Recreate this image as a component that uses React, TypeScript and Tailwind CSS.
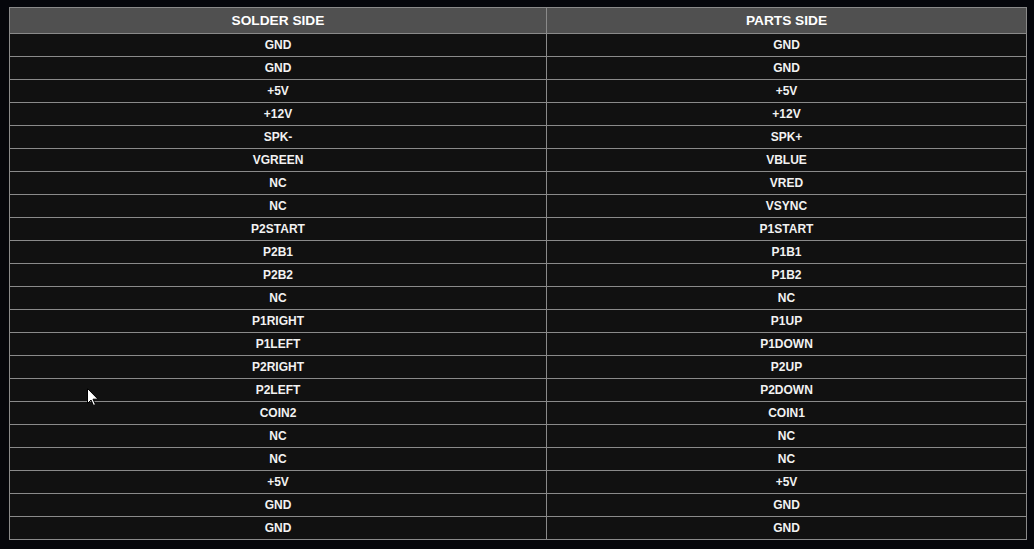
const rows: [string, string][] = [
  ["GND", "GND"],
  ["GND", "GND"],
  ["+5V", "+5V"],
  ["+12V", "+12V"],
  ["SPK-", "SPK+"],
  ["VGREEN", "VBLUE"],
  ["NC", "VRED"],
  ["NC", "VSYNC"],
  ["P2START", "P1START"],
  ["P2B1", "P1B1"],
  ["P2B2", "P1B2"],
  ["NC", "NC"],
  ["P1RIGHT", "P1UP"],
  ["P1LEFT", "P1DOWN"],
  ["P2RIGHT", "P2UP"],
  ["P2LEFT", "P2DOWN"],
  ["COIN2", "COIN1"],
  ["NC", "NC"],
  ["NC", "NC"],
  ["+5V", "+5V"],
  ["GND", "GND"],
  ["GND", "GND"],
];

export default function App() {
  return (
    <main
      className="relative w-[1034px] h-[549px] bg-[#05060b] pt-[7px] pl-[9px] overflow-hidden"
      style={{ fontFamily: '"Liberation Sans", Arial, sans-serif' }}
    >
      <table className="w-[1018px] border-collapse border border-[#8a8a8a] text-white font-bold">
        <thead>
          <tr className="h-[26px] bg-[#505050] text-[13.7px]">
            <th className="w-[537px] border border-[#8a8a8a] p-0 pt-px text-center">SOLDER SIDE</th>
            <th className="border border-[#8a8a8a] p-0 pt-px text-center">PARTS SIDE</th>
          </tr>
        </thead>
        <tbody>
          {rows.map(([solder, parts], i) => (
            <tr key={i} className="h-[23px] bg-[#111111] text-[12px] text-[#f2f2f2]">
              <td className="border border-[#8a8a8a] p-0 text-center">{solder}</td>
              <td className="border border-[#8a8a8a] p-0 text-center">{parts}</td>
            </tr>
          ))}
        </tbody>
      </table>

      {/* mouse pointer */}
      <svg
        className="absolute left-[87px] top-[388px]"
        width="12"
        height="19"
        viewBox="0 0 12 19"
      >
        <path
          d="M0.5 0.5 L0.5 15.5 L4 12 L6.5 17.5 L8.5 16.5 L6 11.2 L11 11.2 Z"
          fill="#ffffff"
          stroke="#000000"
          strokeWidth="1"
        />
      </svg>
    </main>
  );
}
